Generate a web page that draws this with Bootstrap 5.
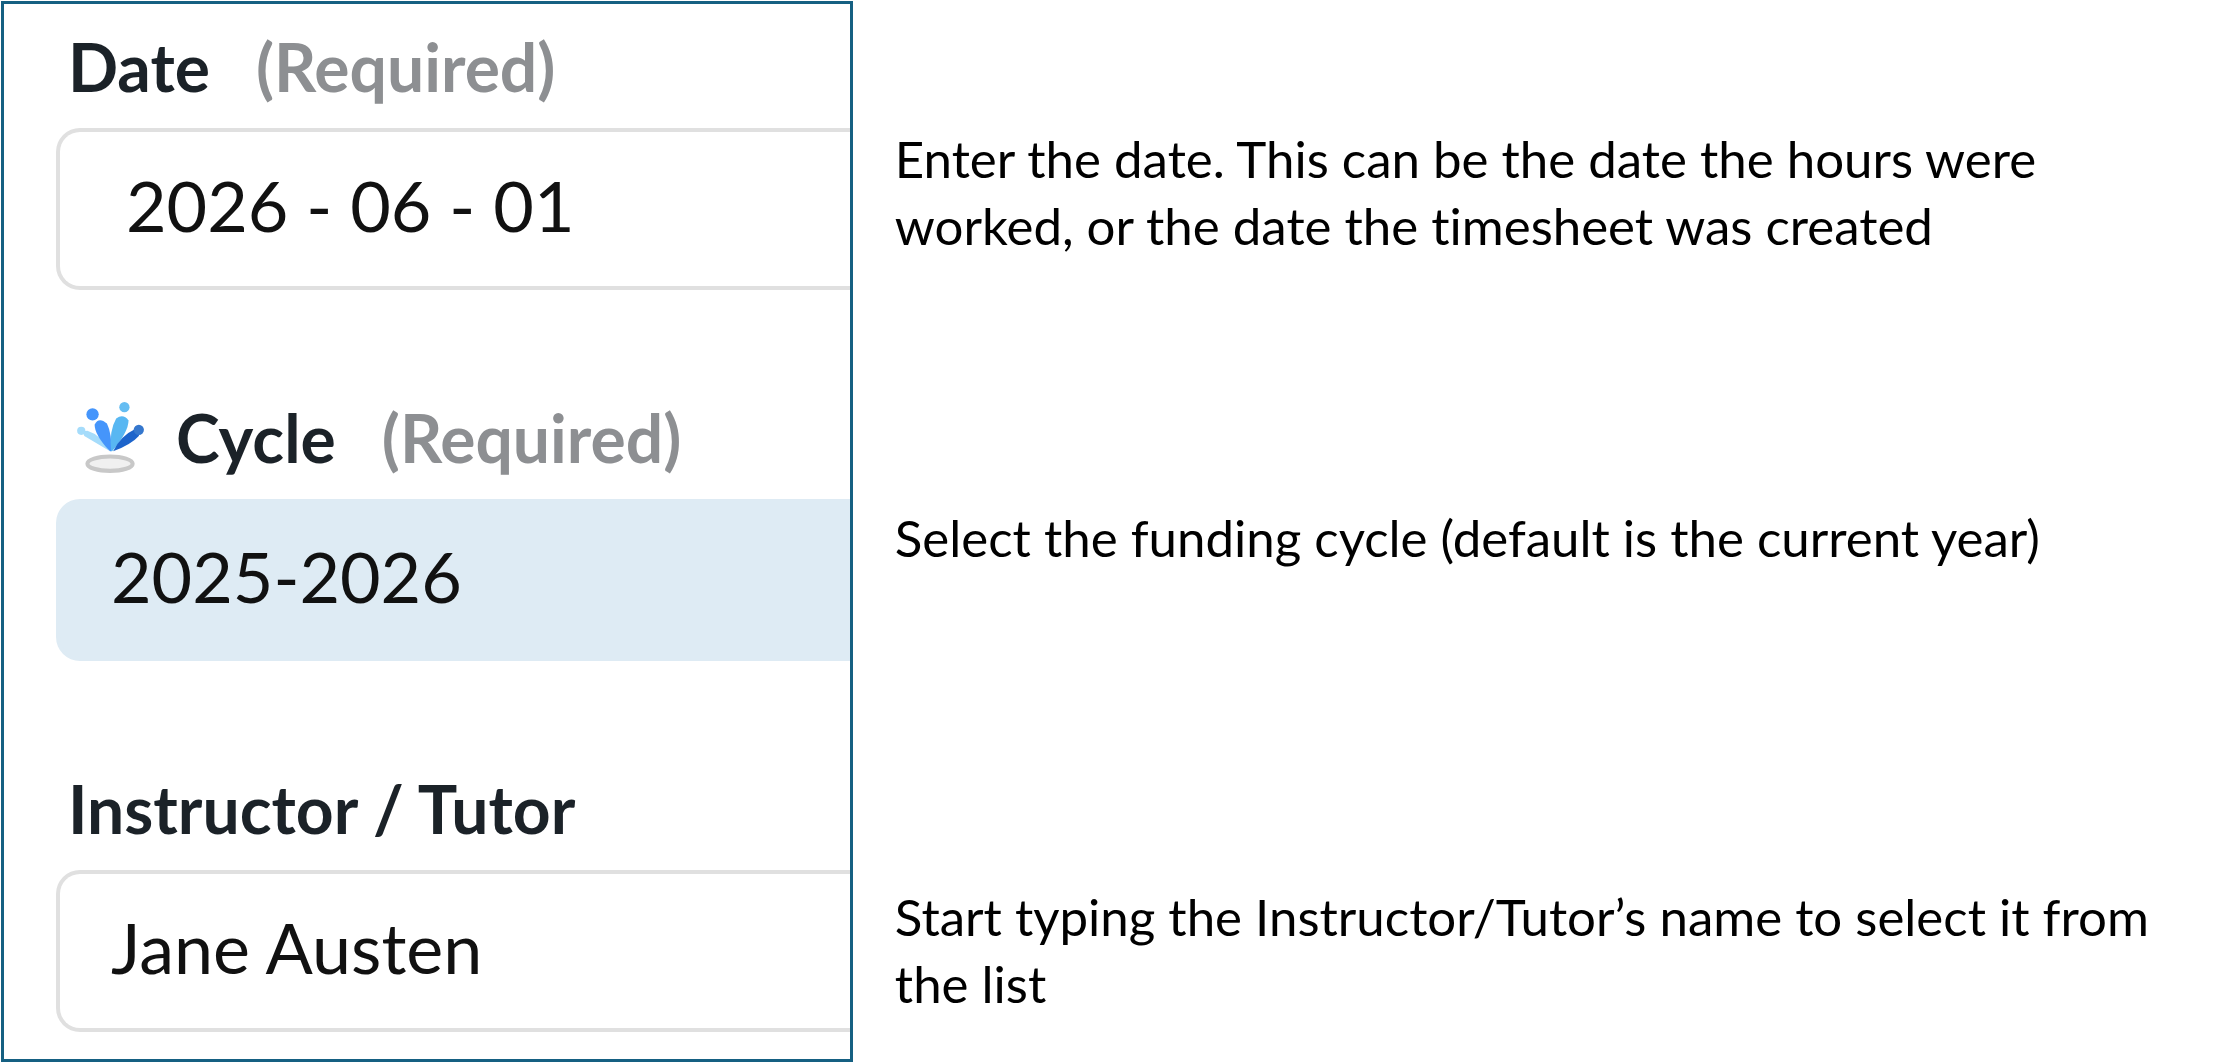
<!DOCTYPE html>
<html lang="en">
<head>
<meta charset="utf-8">
<meta name="viewport" content="width=device-width, initial-scale=1">
<title>Timesheet fields</title>
<link href="https://cdn.jsdelivr.net/npm/bootstrap@5.3.0/dist/css/bootstrap.min.css" rel="stylesheet">
<style>
  body { font-family: Lato, Carlito, sans-serif; color: #000; background: #fff; font-variant-ligatures: no-common-ligatures; }
  .guide { padding: 1px; }
  .form-panel { flex: 0 0 38.2%; border: 3px solid #156082; padding: 26px 0 27px 52px; background: #fff; }
  .form-panel form { gap: 111px; }
  .field-title { font-size: 66px; line-height: 74px; font-weight: 700; color: #1b2228; margin: 0 0 24px; padding-left: 12px; white-space: nowrap; }
  .field-title .need { color: #8d8f92; margin-left: 46px; }
  .field-title svg { width: 74px; height: 74px; margin: 0 30px 0 4px; }
  .field-box { height: 162px; border: 4px solid #e0e0e0; border-right: 0; border-radius: 24px 0 0 24px; font-size: 70px; line-height: 84px; color: #111; padding: 0 0 8px 51px; background: #fff; }
  .date-box { padding-left: 66px; }
  .cycle-box { background: #deebf4; border-color: #deebf4; }
  .notes { padding: 124px 60px 0 42px; display: grid; grid-template-rows: 379px 379px auto; align-content: start; font-size: 51px; line-height: 67px; }
</style>
<script src="https://cdn.jsdelivr.net/npm/bootstrap@5.3.0/dist/js/bootstrap.bundle.min.js" defer></script>
</head>
<body>
<main class="guide d-flex align-items-start">
  <section class="form-panel">
    <form class="d-flex flex-column">
      <div>
        <label class="field-title d-flex align-items-center" for="date">Date <span class="need">(Required)</span></label>
        <input class="field-box date-box form-control" id="date" type="text" value="2026 - 06 - 01">
      </div>
      <div>
        <label class="field-title d-flex align-items-center" for="cycle">
          <svg viewBox="0 0 72 72" aria-hidden="true">
            <ellipse cx="37" cy="61" rx="22" ry="7" fill="#f0f0f0" stroke="#c8c8c8" stroke-width="4"/>
            <path d="M37 49 12 34q-3-5 3-5Q28 33 37 49Z" fill="#a5dcfb"/>
            <path d="M37 49Q22 33 22 23q4-8 12-1 5 10 4 27Z" fill="#4595fb"/>
            <path d="M38 49Q36 29 43 17q7-5 12 2 0 11-16 30Z" fill="#58b7f2"/>
            <path d="M40 49Q47 34 62 27q5 2 3 7-7 8-25 15Z" fill="#1d64cb"/>
            <circle cx="9" cy="29" r="4" fill="#a5dcfb"/>
            <circle cx="20" cy="13" r="6" fill="#4595fb"/>
            <circle cx="51" cy="6" r="5" fill="#65bdf2"/>
            <circle cx="65" cy="28" r="5" fill="#3577cd"/>
          </svg>
          Cycle <span class="need">(Required)</span></label>
        <select class="field-box cycle-box form-control" id="cycle"><option>2025-2026</option></select>
      </div>
      <div>
        <label class="field-title d-flex align-items-center" for="tutor">Instructor / Tutor</label>
        <input class="field-box form-control" id="tutor" type="text" value="Jane Austen">
      </div>
    </form>
  </section>
  <section class="notes flex-fill">
    <p class="m-0">Enter the date. This can be the date the hours were worked, or the date the timesheet was created</p>
    <p class="m-0">Select the funding cycle (default is the current year)</p>
    <p class="m-0">Start typing the Instructor/Tutor’s name to select it from the list</p>
  </section>
</main>
</body>
</html>
